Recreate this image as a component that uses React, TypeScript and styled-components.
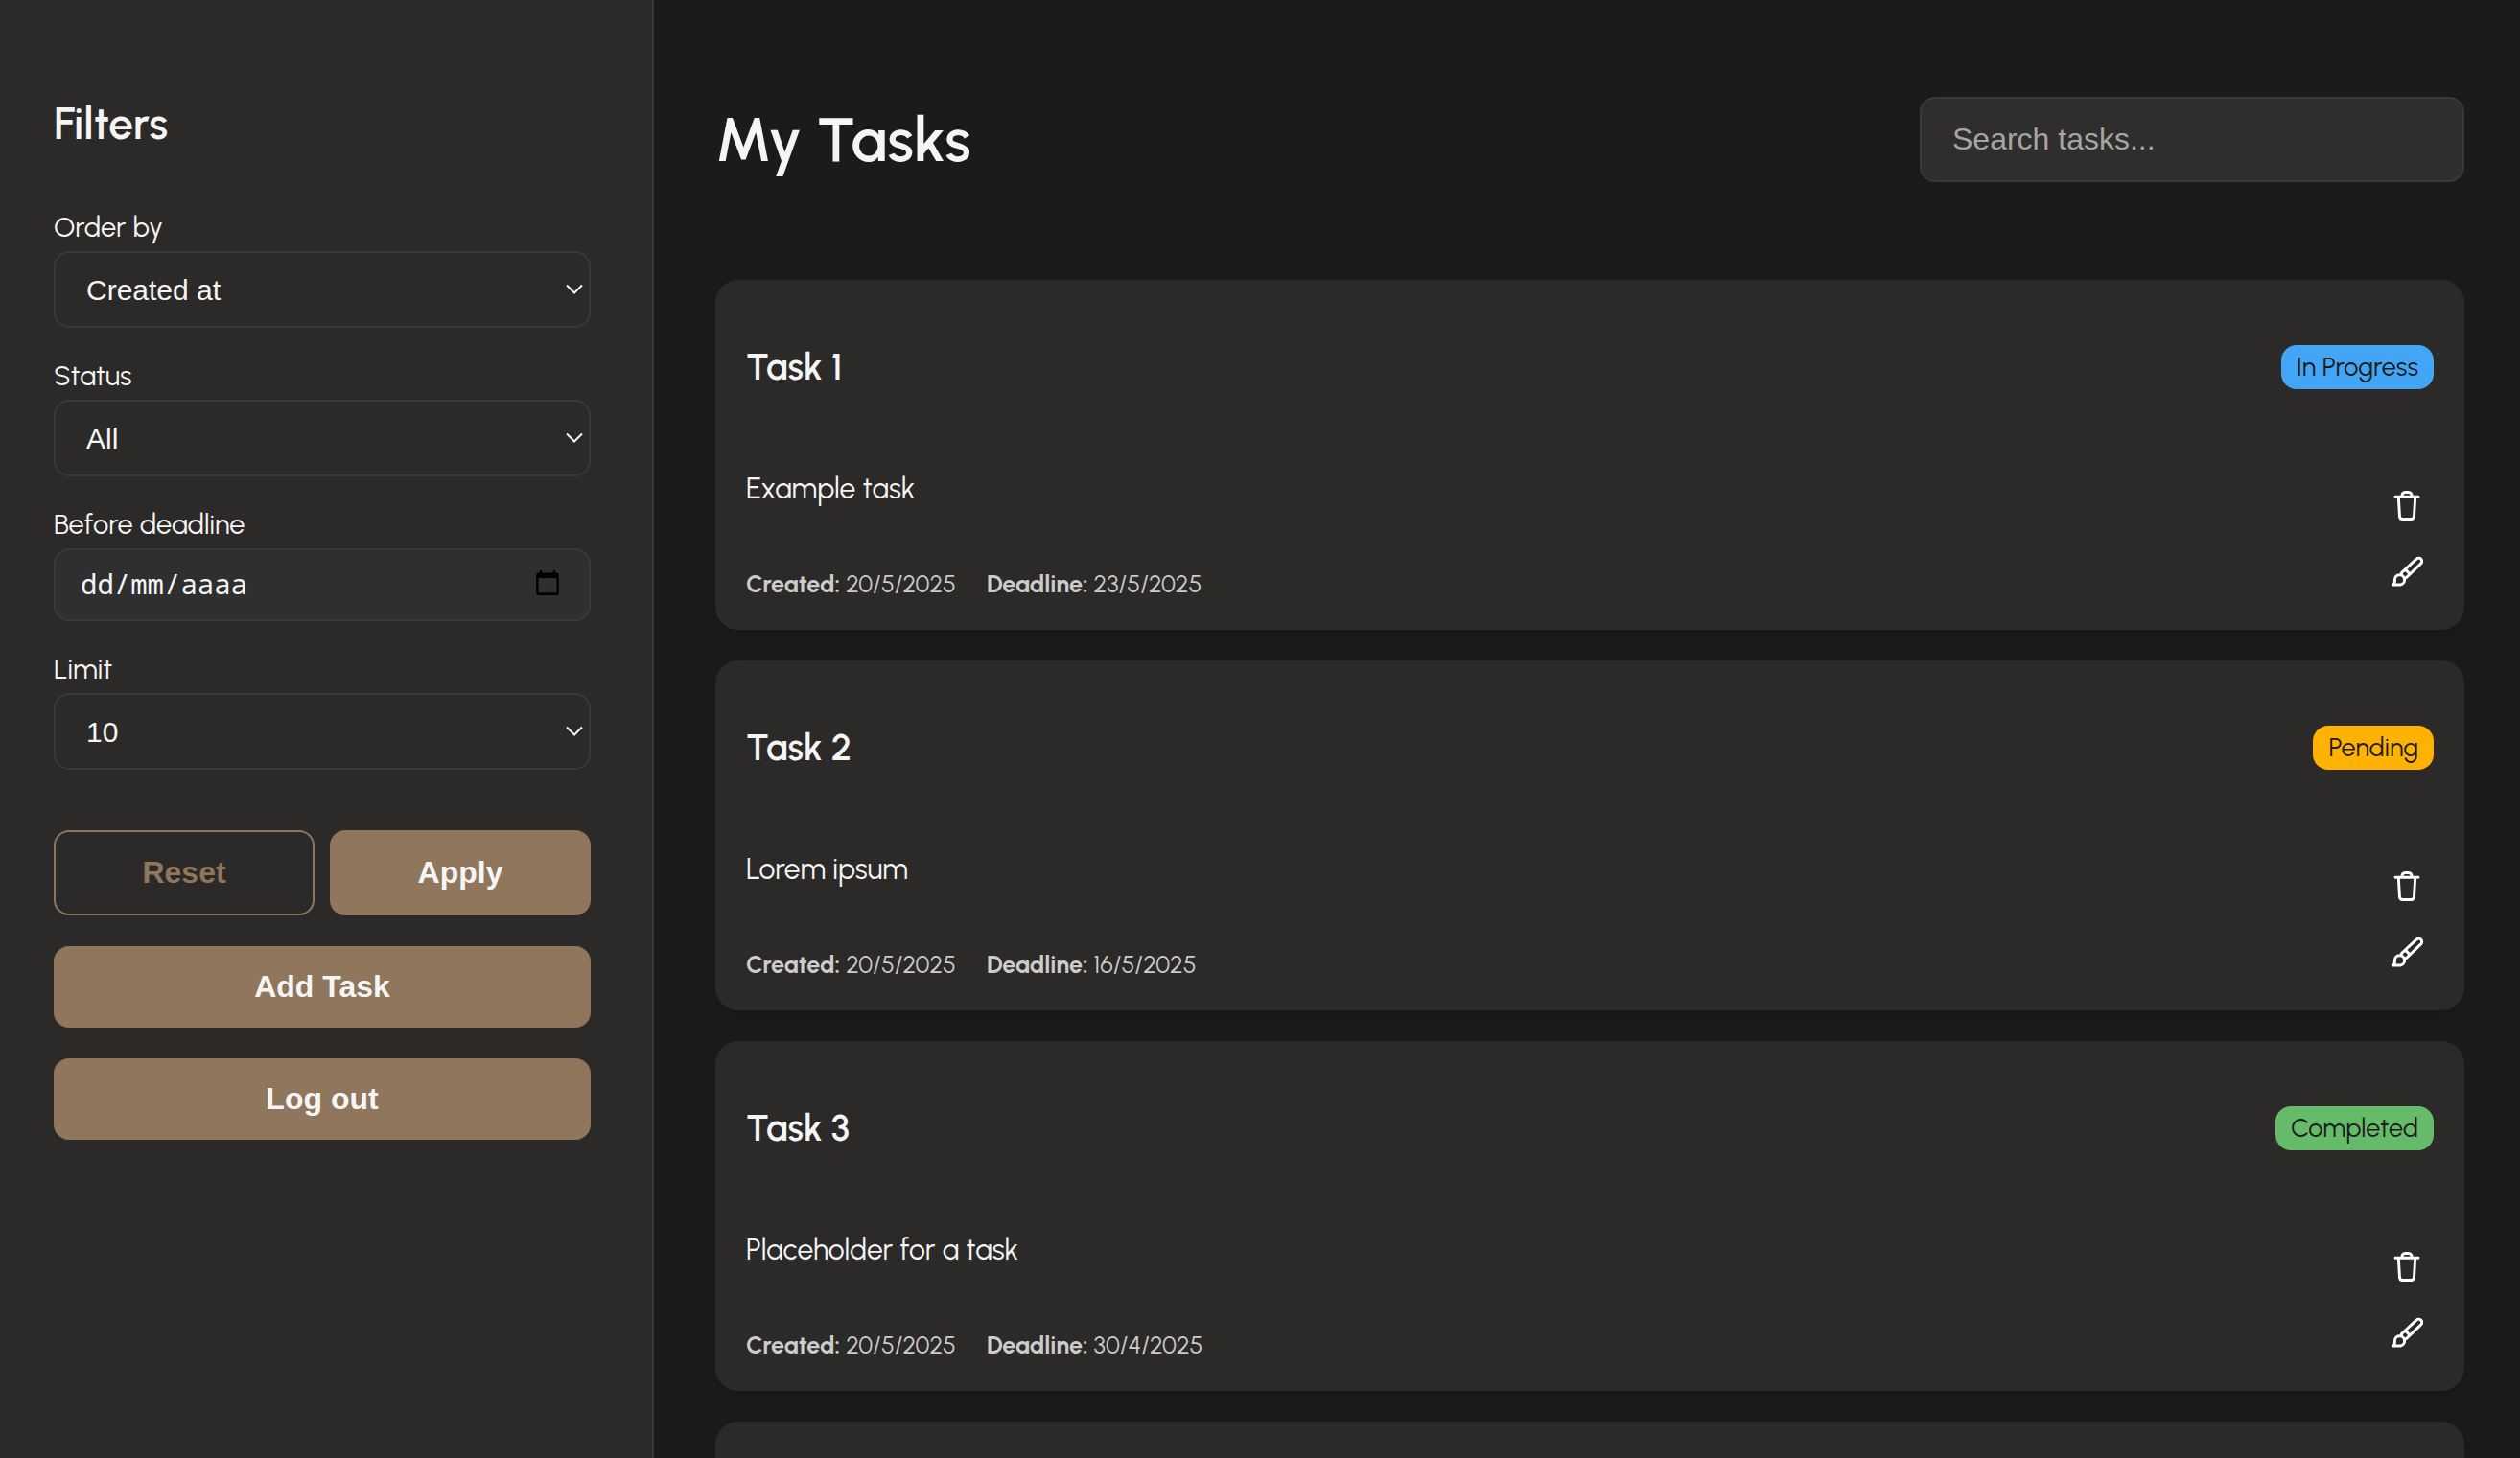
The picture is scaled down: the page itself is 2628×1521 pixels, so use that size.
import React from 'react';
import styled, { createGlobalStyle, css } from 'styled-components';

const BODY_FONT = 'Urbanist, Lato, sans-serif';
const CONTROL_FONT = '"Liberation Sans", Arial, sans-serif';

const GlobalStyle = createGlobalStyle`
  *, *::before, *::after { box-sizing: border-box; }
  body {
    margin: 0;
    background: #1c1b19;
    color: #f5f5f5;
    font-family: ${BODY_FONT};
    overflow: hidden;
  }
`;

const Page = styled.div`
  display: flex;
  height: 100vh;
  overflow: hidden;
`;

const Sidebar = styled.aside`
  flex: 0 0 682px;
  display: flex;
  flex-direction: column;
  padding: 103px 64px 64px 56px;
  background: #2b2a28;
  border-right: 2px solid #3a3937;
`;

const SidebarTitle = styled.h2`
  margin: 0 0 62px;
  font-size: 46px;
  line-height: 52px;
  font-weight: 600;
`;

const FilterForm = styled.form`
  display: flex;
  flex-direction: column;
`;

const Field = styled.div`
  display: flex;
  flex-direction: column;
  margin-bottom: 30px;
`;

const Label = styled.label`
  height: 45px;
  font-size: 29px;
  line-height: 40px;
`;

const controlBox = css`
  width: 100%;
  border: 2px solid #3a3937;
  border-radius: 16px;
  color: #f5f5f5;
`;

const SelectBox = styled.div`
  display: grid;
  align-items: center;
  > * { grid-area: 1 / 1; }
  > svg { justify-self: end; margin-right: 8px; pointer-events: none; }
`;

const Select = styled.select`
  ${controlBox}
  height: 80px;
  padding: 0 32px;
  appearance: none;
  background: transparent;
  font: 30px ${CONTROL_FONT};
`;

const DateBox = styled.div`
  ${controlBox}
  display: flex;
  align-items: center;
  height: 76px;
  padding: 0 31px 4px 26px;
  background: #302f2f;
`;

const DateInput = styled.input`
  flex: 1;
  min-width: 0;
  border: 0;
  padding: 0;
  background: none;
  color: #f5f5f5;
  font: 29px "Noto Sans Mono", "DejaVu Sans Mono", monospace;
  outline: 0;
  &::placeholder { color: #f5f5f5; opacity: 1; }
`;

const ButtonRow = styled.div`
  display: flex;
  gap: 16px;
  margin: 33px 0 32px;
`;

const Button = styled.button<{ $outline?: boolean; $tall?: boolean }>`
  flex: 1 1 0;
  width: 100%;
  min-height: ${p => (p.$tall ? 89 : 85)}px;
  padding: 0 30px;
  border: 2px solid #8f765c;
  border-radius: 16px;
  background: ${p => (p.$outline ? 'transparent' : '#8f765c')};
  color: ${p => (p.$outline ? '#8f765c' : '#f5f5f5')};
  font: bold 32px ${CONTROL_FONT};
  cursor: pointer;
`;

const SidebarActions = styled.div`
  display: flex;
  flex-direction: column;
  gap: 32px;
`;

const Main = styled.main`
  flex: 1;
  min-width: 0;
  padding: 101px 58px 0 64px;
`;

const Header = styled.header`
  display: flex;
  align-items: center;
  justify-content: space-between;
  margin-bottom: 102px;
`;

const PageTitle = styled.h1`
  margin: 0;
  font-size: 64px;
  line-height: 76px;
  font-weight: 600;
`;

const Search = styled.input`
  ${controlBox}
  width: 568px;
  height: 89px;
  padding: 0 32px;
  background: #2f2e2c;
  font: 32px ${CONTROL_FONT};
  &::placeholder { color: #a5a5a5; opacity: 1; }
`;

const TaskList = styled.div`
  display: flex;
  flex-direction: column;
  gap: 32px;
`;

const Card = styled.article`
  min-height: 365px;
  padding: 68px 32px 0;
  border-radius: 24px;
  background: #2b2a28;
  box-shadow: 0 4px 12px rgba(0, 0, 0, 0.15);
`;

const CardHeader = styled.div`
  display: flex;
  align-items: center;
  justify-content: space-between;
  margin-bottom: 68px;
`;

const TaskTitle = styled.h3`
  margin: 0;
  font-size: 38px;
  line-height: 46px;
  font-weight: 600;
`;

const Badge = styled.span<{ $color: string }>`
  padding: 0 16px;
  border-radius: 16px;
  background: ${p => p.$color};
  color: #1c1b19;
  font-size: 27px;
  line-height: 46px;
`;

const CardBody = styled.div`
  display: flex;
  justify-content: space-between;
`;

const Description = styled.p`
  margin: 0 0 61px;
  padding-top: 16px;
  font-size: 30px;
  line-height: 40px;
`;

const Meta = styled.div`
  display: flex;
  gap: 32px;
  color: #cccccc;
  font-size: 25px;
  line-height: 36px;
`;

const Actions = styled.div`
  display: flex;
  flex-direction: column;
  gap: 13px;
  padding-top: 25px;
`;

const IconButton = styled.button`
  display: grid;
  place-items: center;
  width: 56px;
  height: 56px;
  padding: 0;
  border: 0;
  background: none;
  color: #ffffff;
  cursor: pointer;
`;

const Chevron = () => (
  <svg width="18" height="12" viewBox="0 0 18 12" fill="none" stroke="#f5f5f5" strokeWidth="2" aria-hidden="true">
    <path d="M1 1.5 9 9.5 17 1.5" />
  </svg>
);

const CalendarIcon = () => (
  <svg width="24" height="26" viewBox="0 0 24 26" aria-hidden="true">
    <path fillRule="evenodd" d="M4 0h2.300v2.500h11.500V0h2.300v2.500h1.500A2.200 2.200 0 0 1 23.800 4.700v19a2.200 2.200 0 0 1-2.200 2.200h-19.200A2.200 2.200 0 0 1 .2 23.700v-19a2.200 2.200 0 0 1 2.200-2.200H4zM2.500 8v15.300h19V8z" />
  </svg>
);

const TrashIcon = () => (
  <svg width="34" height="34" viewBox="0 0 34 34" fill="none" stroke="currentColor" strokeWidth="2.900" strokeLinecap="round" strokeLinejoin="round" aria-hidden="true">
    <path d="M5 8.300h24M11.800 8.300C11.800 5.500 12.800 3.500 15.500 3.500h3c2.700 0 3.700 2 3.700 4.800M8.300 8.300l1.200 20.400a3 3 0 0 0 3 2.800h9a3 3 0 0 0 3-2.800l1.200-20.400" />
  </svg>
);

const BrushIcon = () => (
  <svg width="34" height="34" viewBox="0 0 34 34" fill="none" stroke="currentColor" strokeWidth="3" strokeLinecap="round" strokeLinejoin="round" aria-hidden="true">
    <path d="M11.500 20V18.500L27 4.200a3.200 3.200 0 0 1 4.700 4.600L16.500 23.500 14.200 24M15.800 15.400l4.400 4.600M2.500 30.900c1.700-.6 2.100-2.200 1.900-5a5.100 5.100 0 1 1 6 5z" />
  </svg>
);

type SelectFieldProps = { id: string; label: string; options: string[] };

const SelectField = ({ id, label, options }: SelectFieldProps) => (
  <Field>
    <Label htmlFor={id}>{label}</Label>
    <SelectBox>
      <Select id={id}>
        {options.map(option => <option key={option}>{option}</option>)}
      </Select>
      <Chevron />
    </SelectBox>
  </Field>
);

type Task = { title: string; status: string; color: string; text: string; created: string; deadline: string };

const tasks: Task[] = [
  { title: 'Task 1', status: 'In Progress', color: '#42a5f5', text: 'Example task', created: '20/5/2025', deadline: '23/5/2025' },
  { title: 'Task 2', status: 'Pending', color: '#ffb300', text: 'Lorem ipsum', created: '20/5/2025', deadline: '16/5/2025' },
  { title: 'Task 3', status: 'Completed', color: '#66bb6a', text: 'Placeholder for a task', created: '20/5/2025', deadline: '30/4/2025' },
];

const TaskCard = ({ task }: { task: Task }) => (
  <Card>
    <CardHeader>
      <TaskTitle>{task.title}</TaskTitle>
      <Badge $color={task.color}>{task.status}</Badge>
    </CardHeader>
    <CardBody>
      <div>
        <Description>{task.text}</Description>
        <Meta>
          <span><strong>Created:</strong> {task.created}</span>
          <span><strong>Deadline:</strong> {task.deadline}</span>
        </Meta>
      </div>
      <Actions>
        <IconButton type="button" aria-label="Delete"><TrashIcon /></IconButton>
        <IconButton type="button" aria-label="Edit"><BrushIcon /></IconButton>
      </Actions>
    </CardBody>
  </Card>
);

export default function App() {
  return (
    <>
      <GlobalStyle />
      <Page>
        <Sidebar>
          <SidebarTitle>Filters</SidebarTitle>
          <FilterForm onSubmit={event => event.preventDefault()}>
            <SelectField id="order" label="Order by" options={['Created at']} />
            <SelectField id="status" label="Status" options={['All']} />
            <Field>
              <Label htmlFor="deadline">Before deadline</Label>
              <DateBox>
                <DateInput id="deadline" type="text" placeholder="dd/mm/aaaa" />
                <CalendarIcon />
              </DateBox>
            </Field>
            <SelectField id="limit" label="Limit" options={['10']} />
            <ButtonRow>
              <Button type="reset" $outline $tall>Reset</Button>
              <Button type="submit" $tall>Apply</Button>
            </ButtonRow>
          </FilterForm>
          <SidebarActions>
            <Button type="button">Add Task</Button>
            <Button type="button">Log out</Button>
          </SidebarActions>
        </Sidebar>
        <Main>
          <Header>
            <PageTitle>My Tasks</PageTitle>
            <Search type="search" aria-label="Search tasks" placeholder="Search tasks..." />
          </Header>
          <TaskList>
            {tasks.map(task => <TaskCard key={task.title} task={task} />)}
            <Card />
          </TaskList>
        </Main>
      </Page>
    </>
  );
}
